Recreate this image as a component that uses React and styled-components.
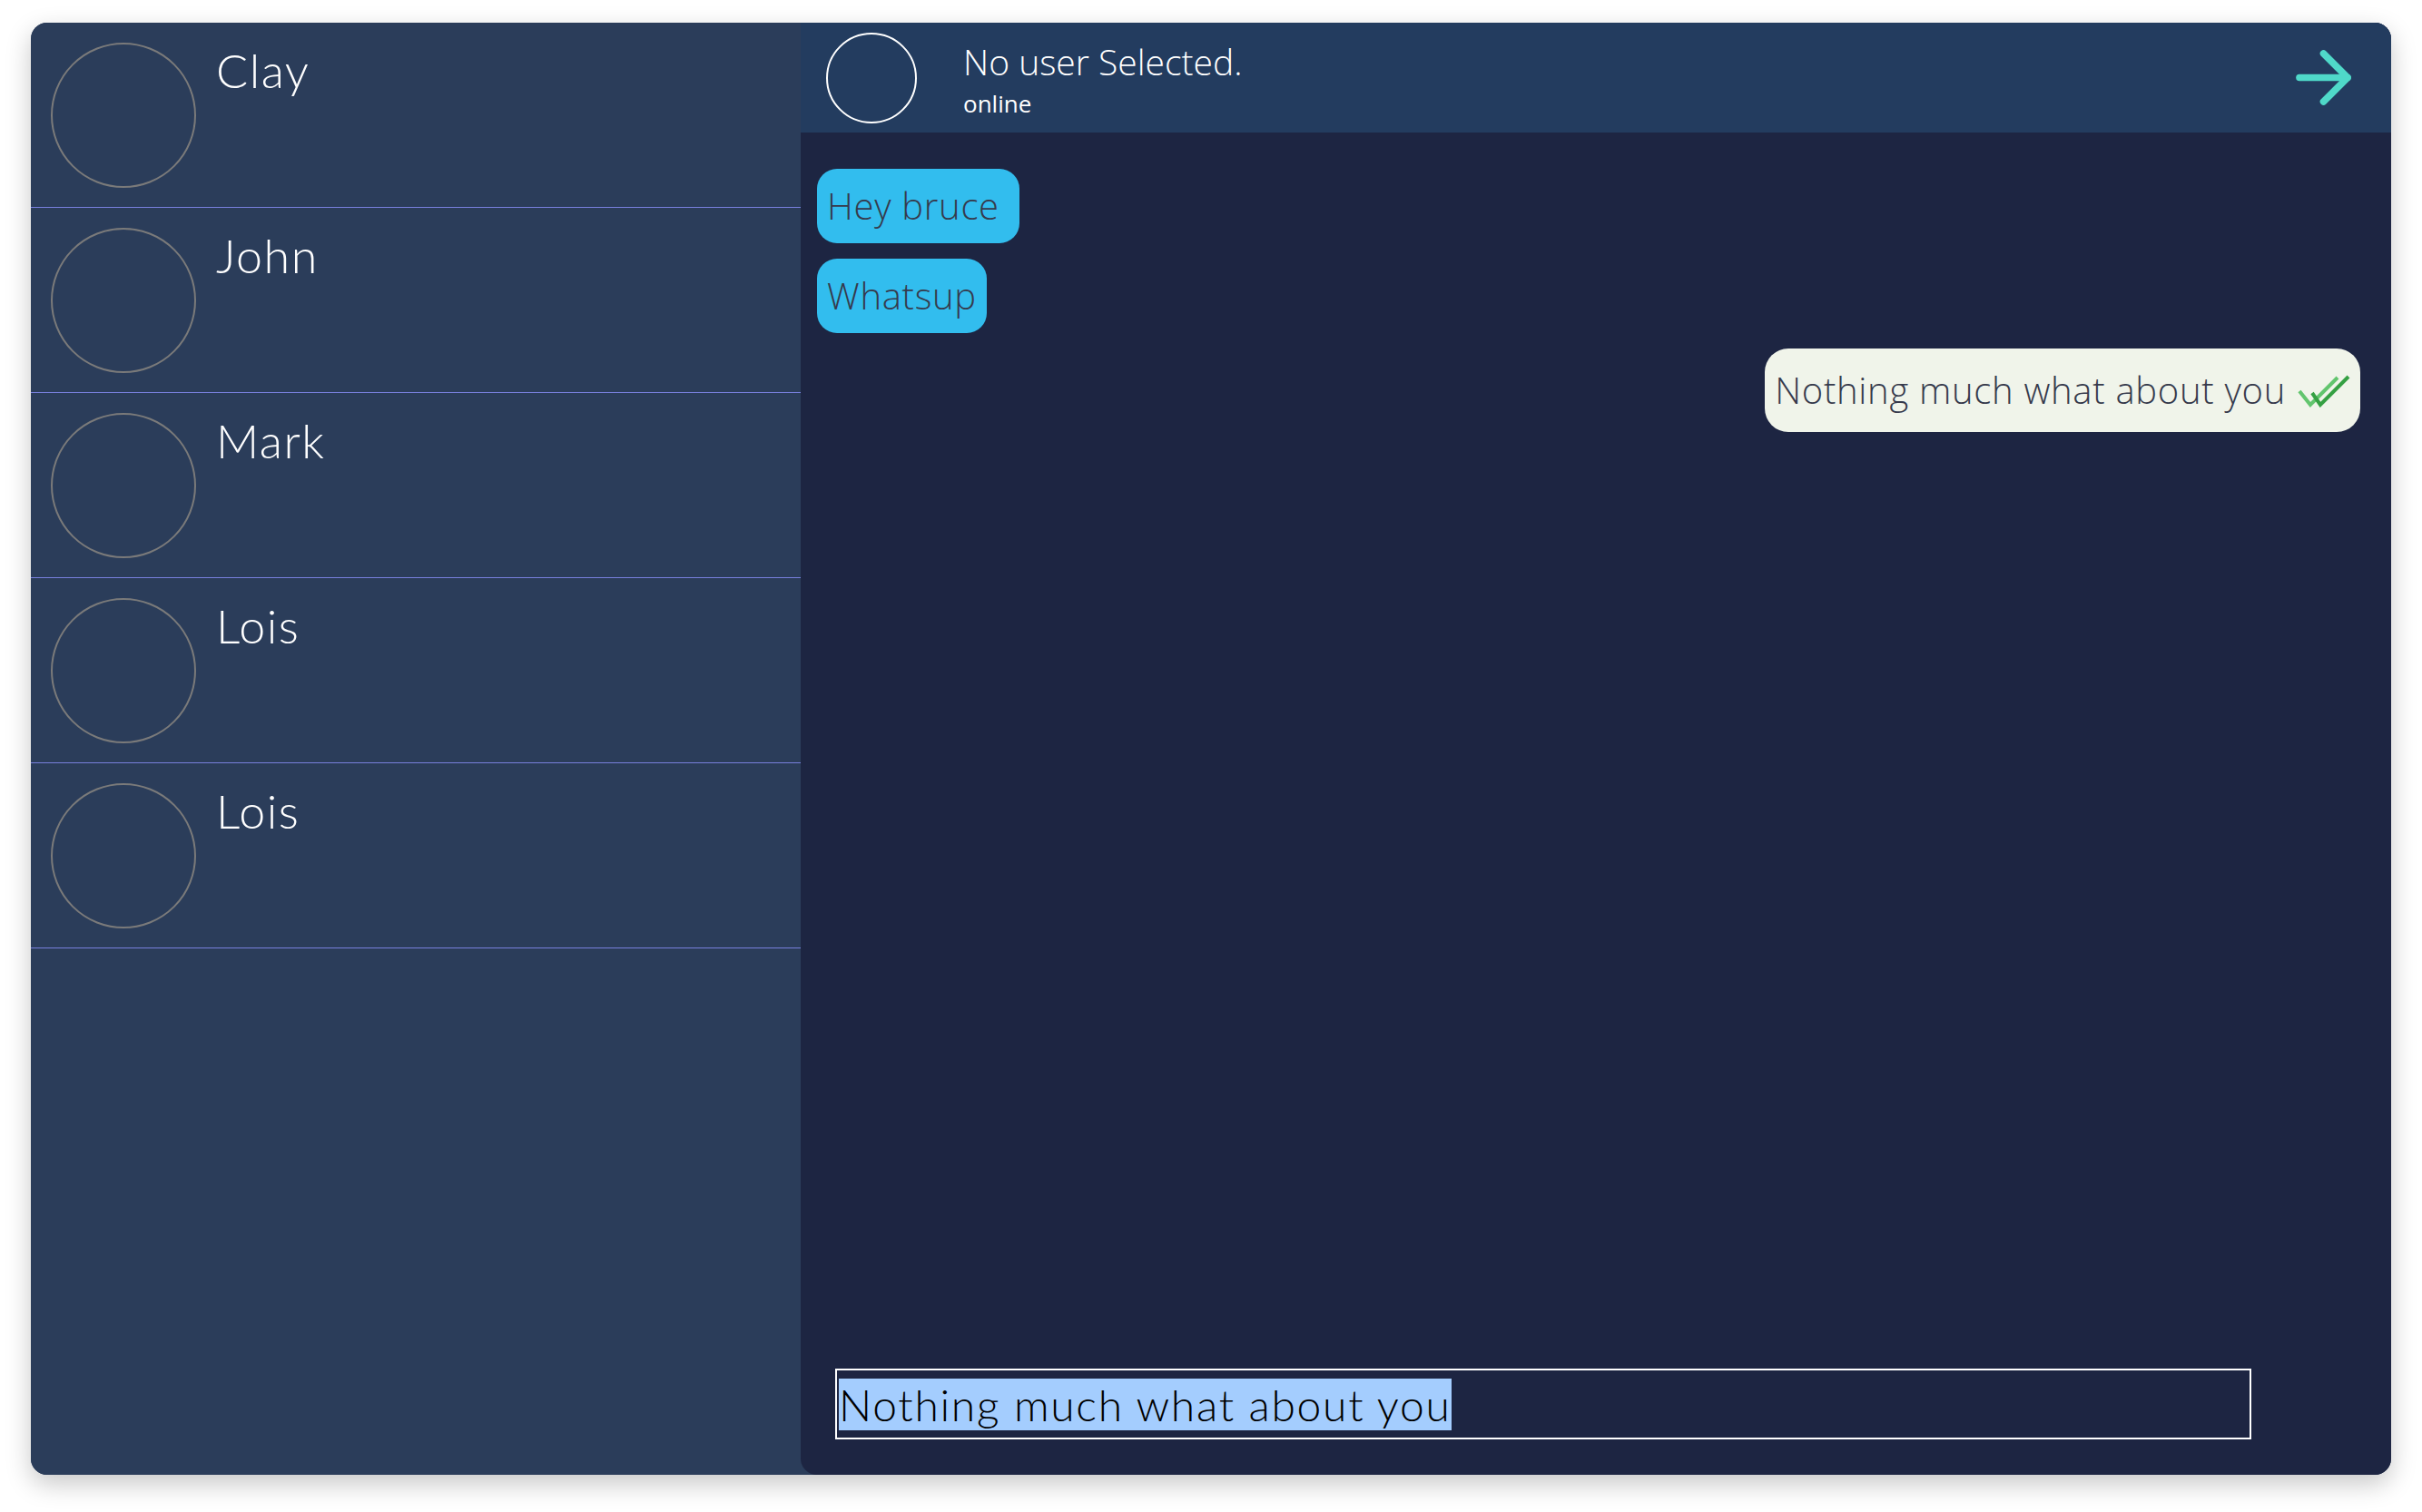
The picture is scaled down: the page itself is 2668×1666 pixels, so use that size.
import { useEffect, useRef } from 'react';
import styled, { createGlobalStyle } from 'styled-components';
import { ArrowRight } from 'lucide-react';

const GlobalStyle = createGlobalStyle`
  html, body {
    margin: 0;
    background: #ffffff;
  }
  * {
    box-sizing: border-box;
  }
`;

const Page = styled.div`
  padding: 25px 34px 42px;
`;

const Card = styled.div`
  width: 2600px;
  height: 1600px;
  display: grid;
  grid-template-columns: 848px 1fr;
  border-radius: 18px;
  overflow: hidden;
  background-color: #2b3d5a;
  box-shadow: 0 10px 28px rgba(0, 0, 0, 0.22);
`;

const Sidebar = styled.div`
  display: flex;
  flex-direction: column;
  background-color: #2b3d5a;
`;

const ContactRow = styled.div`
  height: 204px;
  display: flex;
  align-items: center;
  gap: 22px;
  padding: 0 22px;
  border-bottom: 1px solid #7880dc;
`;

const ContactAvatar = styled.div`
  width: 160px;
  height: 160px;
  flex-shrink: 0;
  border-radius: 50%;
  border: 2px solid #7a7a7a;
`;

const ContactName = styled.h3`
  align-self: flex-start;
  margin: 21px 0 0;
  font-family: 'Lato', 'Open Sans', sans-serif;
  font-weight: 300;
  font-size: 52px;
  letter-spacing: 1.5px;
  line-height: 1.2;
  color: #ffffff;
`;

const ChatPanel = styled.div`
  display: flex;
  flex-direction: column;
  background-color: #1d2542;
  border-bottom-left-radius: 18px;
  min-width: 0;
`;

const ChatHeader = styled.div`
  height: 121px;
  flex-shrink: 0;
  display: flex;
  align-items: center;
  padding: 0 29px 0 28px;
  background-color: #233c5f;
  svg {
    color: #4fd9c9;
    flex-shrink: 0;
  }
`;

const HeaderAvatar = styled.div`
  width: 100px;
  height: 100px;
  border-radius: 50%;
  border: 2px solid #ffffff;
  flex-shrink: 0;
`;

const HeaderText = styled.div`
  flex: 1;
  display: flex;
  flex-direction: column;
  gap: 10px;
  margin: 4px 0 0 51px;
  color: #ffffff;
  h2 {
    margin: 0;
    font-family: 'Open Sans', sans-serif;
    font-weight: 300;
    font-size: 39px;
    line-height: 42px;
  }
  span {
    font-family: 'Open Sans', sans-serif;
    font-weight: 500;
    font-size: 26px;
    line-height: 30px;
  }
`;

const Messages = styled.div`
  flex: 1;
  display: flex;
  flex-direction: column;
  gap: 17px;
  padding: 40px 34px 0 18px;
`;

const Bubble = styled.div`
  align-self: ${(p) => (p.$sent ? 'flex-end' : 'flex-start')};
  display: flex;
  align-items: center;
  gap: 13px;
  padding: ${(p) => (p.$sent ? '21px 11px' : '16px 11px')};
  border-radius: ${(p) => (p.$sent ? '26px' : '22px')};
  background-color: ${(p) => (p.$sent ? '#f0f4ea' : '#32bdee')};
  color: #363a4c;
  font-family: 'Open Sans', sans-serif;
  font-weight: 300;
  font-size: 40px;
  letter-spacing: 0.7px;
  line-height: 50px;
  white-space: pre;
`;

const InputBar = styled.div`
  padding: 0 154px 39px 38px;
`;

const MessageInput = styled.input`
  width: 100%;
  height: 78px;
  padding: 0 2px;
  border: 2px solid #ffffff;
  border-radius: 0;
  outline: none;
  background: transparent;
  color: #000000;
  font-family: 'Lato', 'Open Sans', sans-serif;
  font-weight: 300;
  font-size: 48px;
  letter-spacing: 1.7px;
  &::selection {
    background-color: #a4cdfe;
    color: #000000;
  }
`;

// two offset ticks, the back one lighter
const DoubleCheck = () => (
  <svg width="58" height="38" viewBox="0 0 58 38" fill="none">
    <polyline points="2,20 14,35 44,5" stroke="#62c56e" strokeWidth="4" />
    <polyline points="16,22 25,35 56,4" stroke="#35a043" strokeWidth="4" />
  </svg>
);

const contacts = ['Clay', 'John', 'Mark', 'Lois', 'Lois'];

const messages = [
  { id: 1, text: 'Hey bruce ', sent: false },
  { id: 2, text: 'Whatsup', sent: false },
  { id: 3, text: 'Nothing much what about you', sent: true },
];

const App = () => {
  const inputRef = useRef(null);

  useEffect(() => {
    if (inputRef.current) {
      inputRef.current.focus();
      inputRef.current.select();
    }
  }, []);

  return (
    <>
      <GlobalStyle />
      <Page>
        <Card>
          <Sidebar>
            {contacts.map((name, idx) => (
              <ContactRow key={idx}>
                <ContactAvatar />
                <ContactName>{name}</ContactName>
              </ContactRow>
            ))}
          </Sidebar>
          <ChatPanel>
            <ChatHeader>
              <HeaderAvatar />
              <HeaderText>
                <h2>No user Selected.</h2>
                <span>online</span>
              </HeaderText>
              <ArrowRight size={91} strokeWidth={2} />
            </ChatHeader>
            <Messages>
              {messages.map((msg) => (
                <Bubble key={msg.id} $sent={msg.sent}>
                  {msg.text}
                  {msg.sent && <DoubleCheck />}
                </Bubble>
              ))}
            </Messages>
            <InputBar>
              <MessageInput
                ref={inputRef}
                type="text"
                defaultValue="Nothing much what about you"
              />
            </InputBar>
          </ChatPanel>
        </Card>
      </Page>
    </>
  );
};

export default App;
